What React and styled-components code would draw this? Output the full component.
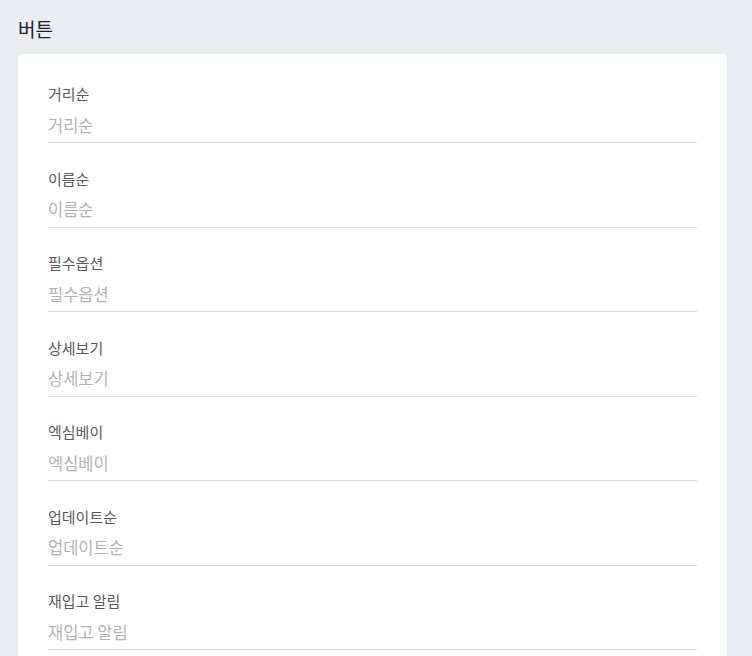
import React from "react"
import styled, { createGlobalStyle } from "styled-components"

const GlobalStyle = createGlobalStyle`
  html, body {
    margin: 0;
    padding: 0;
    background: #eaedf2;
    font-family: "Noto Sans CJK KR", "Noto Sans", sans-serif;
  }
`

const Page = styled.div`
  padding: 16px 25px 0 18px;
  height: 656px;
  box-sizing: border-box;
  overflow: hidden;
`

const Title = styled.h2`
  margin: 0 0 12px;
  font-size: 19px;
  font-weight: 400;
  line-height: 26px;
  color: #222;
`

const Card = styled.div`
  background: #fff;
  border-radius: 3px;
  box-shadow: 0 0 2px rgba(0, 0, 0, 0.06);
  padding: 30px 30px 40px;
`

const Field = styled.label`
  display: flex;
  flex-direction: column;
  margin-bottom: 25.5px;
`

const Label = styled.span`
  font-size: 15px;
  line-height: 20px;
  color: #5a5a5a;
  margin-bottom: 5px;
`

const Input = styled.input`
  height: 34px;
  box-sizing: border-box;
  padding: 0 0 2px;
  border: none;
  border-bottom: 1px solid #dcdcdc;
  outline: none;
  font-family: inherit;
  font-size: 16.5px;
  color: #333;
  background: transparent;

  &::placeholder {
    color: #b3b3b3;
  }
`

const fields = [
  "거리순",
  "이름순",
  "필수옵션",
  "상세보기",
  "엑심베이",
  "업데이트순",
  "재입고 알림",
]

const App = () => (
  <>
    <GlobalStyle />
    <Page>
      <Title>버튼</Title>
      <Card>
        {fields.map((name) => (
          <Field key={name}>
            <Label>{name}</Label>
            <Input placeholder={name} />
          </Field>
        ))}
      </Card>
    </Page>
  </>
)

export default App
